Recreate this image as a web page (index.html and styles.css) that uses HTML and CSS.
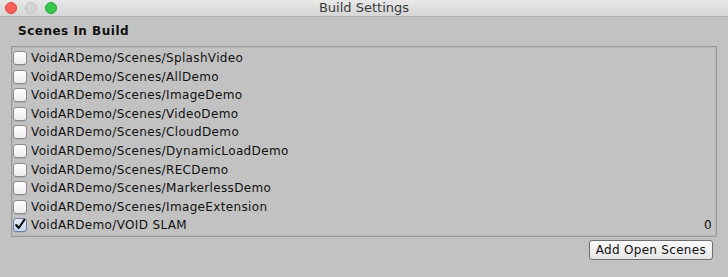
FILE: index.html
```html
<!DOCTYPE html>
<html lang="en">
<head>
    <meta charset="UTF-8">
    <title>Build Settings</title>
    <link rel="stylesheet" href="styles.css">
</head>
<body>
    <!-- Title bar -->
    <div class="titlebar">
        <div class="lights">
            <span class="light red"></span>
            <span class="light grey"></span>
            <span class="light green"></span>
        </div>
        <div class="title">Build Settings</div>
    </div>

    <div class="content">
        <h2>Scenes In Build</h2>

        <!-- Scene list -->
        <div class="scene-list">
            <label class="row"><span class="box"></span>VoidARDemo/Scenes/SplashVideo</label>
            <label class="row"><span class="box"></span>VoidARDemo/Scenes/AllDemo</label>
            <label class="row"><span class="box"></span>VoidARDemo/Scenes/ImageDemo</label>
            <label class="row"><span class="box"></span>VoidARDemo/Scenes/VideoDemo</label>
            <label class="row"><span class="box"></span>VoidARDemo/Scenes/CloudDemo</label>
            <label class="row"><span class="box"></span>VoidARDemo/Scenes/DynamicLoadDemo</label>
            <label class="row"><span class="box"></span>VoidARDemo/Scenes/RECDemo</label>
            <label class="row"><span class="box"></span>VoidARDemo/Scenes/MarkerlessDemo</label>
            <label class="row"><span class="box"></span>VoidARDemo/Scenes/ImageExtension</label>
            <label class="row"><span class="box checked"><svg width="14" height="14" viewBox="0 0 14 14"><path d="M2.5 7 L5.5 10.5 L12 1" fill="none" stroke="#0c0c0c" stroke-width="2.4" stroke-linecap="round" stroke-linejoin="round"/></svg></span>VoidARDemo/VOID SLAM<span class="index">0</span></label>
        </div>

        <div class="actions">
            <button class="btn">Add Open Scenes</button>
        </div>
    </div>
</body>
</html>
```
FILE: styles.css
```css
* {
    margin: 0;
    padding: 0;
    box-sizing: border-box;
}

body {
    width: 728px;
    height: 277px;
    overflow: hidden;
    background-color: #c2c2c2;
    font-family: "DejaVu Sans", "Noto Sans", sans-serif;
    color: #111;
}

/* Title bar */
.titlebar {
    height: 17px;
    background: linear-gradient(#e8e8e8, #d6d6d6);
    border-bottom: 1px solid #b0b0b0;
    position: relative;
    display: flex;
    align-items: center;
    justify-content: center;
}

.lights {
    position: absolute;
    left: 5px;
    top: 2px;
    display: flex;
    gap: 8px;
}

.light {
    width: 12px;
    height: 12px;
    border-radius: 50%;
}

.light.red {
    background: #fc5f57;
    border: 1px solid #e0443e;
}

.light.grey {
    background: #d4d4d4;
    border: 1px solid #c4c4c4;
}

.light.green {
    background: #34c748;
    border: 1px solid #1ea934;
}

.title {
    font-size: 13px;
    color: #3a3a3a;
    line-height: 16px;
}

.content {
    padding: 0 11px 0 11px;
}

h2 {
    font-size: 12px;
    font-weight: bold;
    letter-spacing: 0.5px;
    padding-left: 7px;
    height: 29px;
    line-height: 28px;
}

/* Scene list */
.scene-list {
    height: 191px;
    border: 1px solid #9c9c9c;
    box-shadow: inset 0 0 0 1px #b6b6b6;
    padding: 2px 2px 0 1px;
}

.row {
    display: flex;
    align-items: center;
    height: 18.55px;
    font-size: 12px;
    letter-spacing: 0.35px;
}

.box {
    width: 14px;
    height: 14px;
    margin-right: 4px;
    border: 1px solid #8a8a8a;
    border-radius: 3px;
    background: linear-gradient(#ffffff, #ececec);
    box-shadow: 0 1px 0 rgba(0, 0, 0, 0.08);
    display: flex;
    align-items: center;
    justify-content: center;
    overflow: visible;
}

.box.checked {
    background: linear-gradient(#e4ecf8, #c4d4ec);
    border-color: #6f7f99;
}

.index {
    margin-left: auto;
    padding-right: 2px;
}

/* Buttons */
.actions {
    display: flex;
    justify-content: flex-end;
    padding: 3px 4px 0 0;
}

.btn {
    font-family: "DejaVu Sans", "Noto Sans", sans-serif;
    font-size: 12px;
    letter-spacing: 0.3px;
    color: #111;
    height: 20px;
    padding: 0 6px;
    border: 1px solid #6e6e6e;
    border-radius: 3px;
    background: linear-gradient(#fafafa, #e6e6e6);
}
```
